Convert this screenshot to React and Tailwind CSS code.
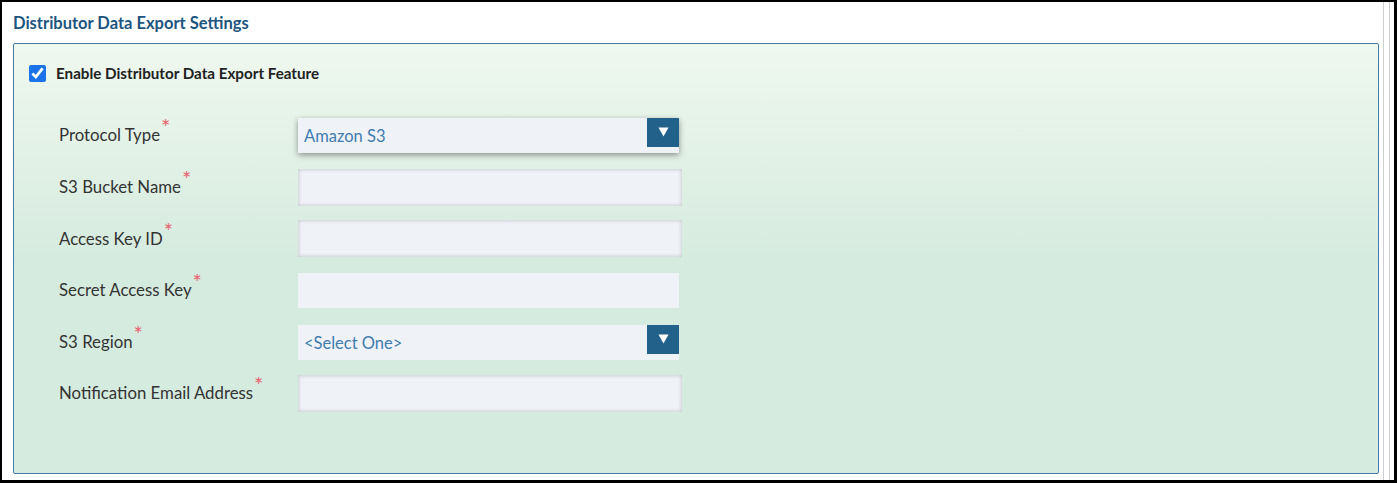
import React from 'react'

const font = { fontFamily: 'Lato, "Liberation Sans", sans-serif' }

function Label({ children }) {
  return (
    <div className="w-[239px] shrink-0 text-[16.8px] text-[#333] leading-none">
      {children}
      <span className="relative -top-[6px] ml-[1px] text-[#e8626f] text-[22px] leading-[0]">*</span>
    </div>
  )
}

function Arrow() {
  return (
    <svg width="11" height="10" viewBox="0 0 11 10">
      <path d="M0.5 0.5 L10.5 0.5 L5.5 9.5 Z" fill="#fff" />
    </svg>
  )
}

function Select({ value, raised }) {
  return (
    <div
      className={`relative w-[381px] h-[35px] bg-[#eff3f8] flex items-center pl-[6px] pt-[2px] text-[16.5px] text-[#3f7cb0] ${
        raised ? 'shadow-[0_2px_6px_rgba(0,0,0,0.4)]' : ''
      }`}
    >
      {value}
      <div className="absolute right-0 top-0 w-[32px] h-[29px] bg-[#22618a] flex justify-center pt-[9px]">
        <Arrow />
      </div>
    </div>
  )
}

function Input({ plain }) {
  return plain ? (
    <div className="w-[381px] h-[35px] bg-[#eff3f8]" />
  ) : (
    <div className="w-[384px] h-[37px] bg-[#eff3f8] shadow-[inset_0_0_4px_rgba(0,0,0,0.22)]" />
  )
}

const rows = [
  { label: 'Protocol Type', field: <Select value="Amazon S3" raised /> },
  { label: 'S3 Bucket Name', field: <Input /> },
  { label: 'Access Key ID', field: <Input /> },
  { label: 'Secret Access Key', field: <Input plain /> },
  { label: 'S3 Region', field: <Select value="<Select One>" /> },
  { label: 'Notification Email Address', field: <Input /> },
]

export default function App() {
  return (
    <div
      style={font}
      className="w-[1397px] h-[483px] bg-white border-l-2 border-t-2 border-r-[3px] border-b-[3px] border-black flex"
    >
      <div className="flex-1 pl-[11px] pr-[4px] flex flex-col">
        <div className="h-[41px] flex items-center text-[16.5px] font-bold text-[#1c5580] pt-[2px]">
          Distributor Data Export Settings
        </div>
        <div className="h-[431px] border border-[#4a7aa8] rounded-[2px] bg-linear-to-b from-[#eff8ef] to-[#d6ebdf] to-50% flex flex-col">
          <div className="flex items-center mt-[21px] ml-[15px] h-[17px]">
            <input type="checkbox" defaultChecked className="w-[17px] h-[17px] m-0 accent-[#1a73e8]" />
            <span className="ml-[10px] text-[15.2px] font-bold text-[#222]">
              Enable Distributor Data Export Feature
            </span>
          </div>
          <div className="mt-[28px] pl-[45px] flex flex-col">
            {rows.map((r) => (
              <div key={r.label} className="h-[51.6px] flex items-center">
                <Label>{r.label}</Label>
                {r.field}
              </div>
            ))}
          </div>
        </div>
      </div>
      <div className="w-[7px] h-full border-x border-[#cfcfcf] mr-[4px]" />
    </div>
  )
}
